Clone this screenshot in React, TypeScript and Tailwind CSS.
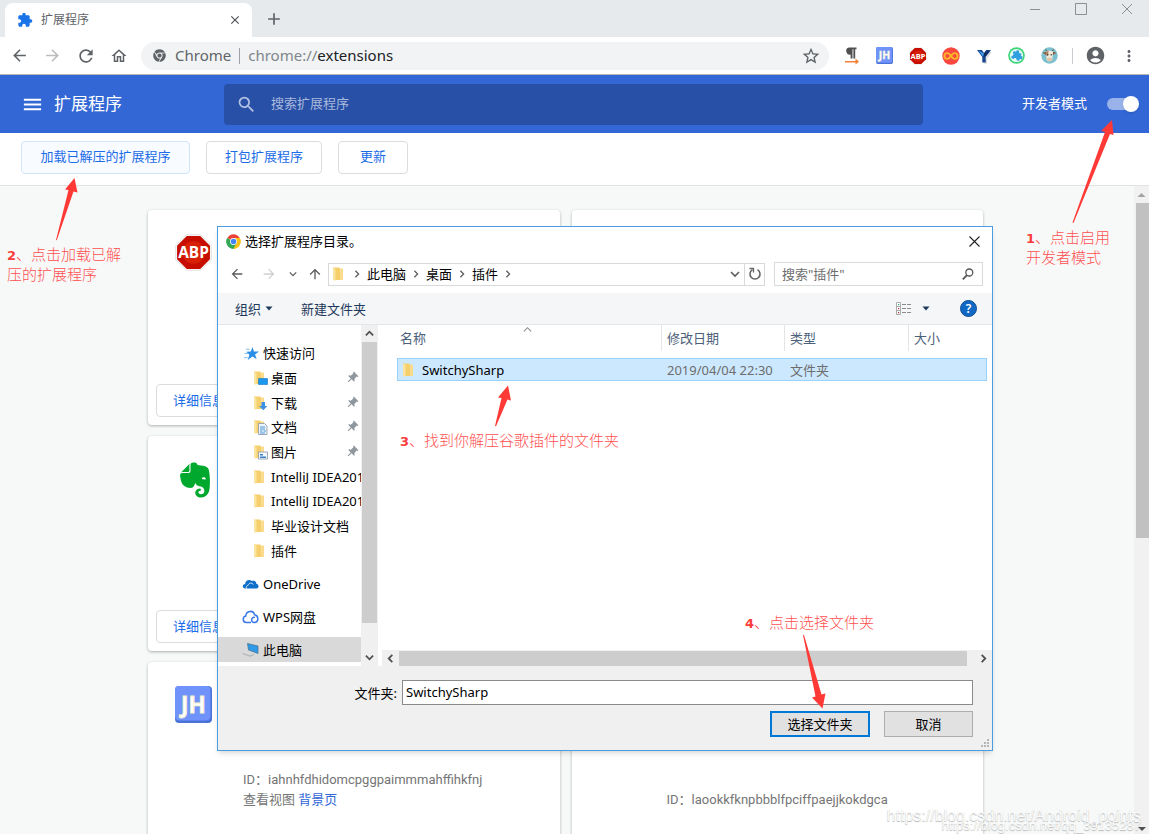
import React from "react";
import {
  MdAccountCircle,
  MdAdd,
  MdArrowBack,
  MdArrowForward,
  MdClose,
  MdExtension,
  MdMenu,
  MdMoreVert,
  MdOutlineHome,
  MdPushPin,
  MdRefresh,
  MdSearch,
  MdStarBorder,
} from "react-icons/md";
import { FaChrome, FaEvernote } from "react-icons/fa";

type IconProps = { className?: string };

/* ---------- logos ---------- */

function AbpLogo({ className }: IconProps) {
  return (
    <svg viewBox="0 0 36 36" className={className} aria-hidden="true">
      <path d="M11 .5h14L35.500 11v14L25 35.500H11L.5 25V11z" fill="#f4f4f4" stroke="#dcdcdc" strokeWidth=".6" />
      <path d="M11.500 2h13L34 11.500v13L24.500 34h-13L2 24.500v-13z" fill="#c70d00" />
      <circle cx="18" cy="18" r="11" fill="#e8340c" opacity=".5" />
      <text x="18" y="23.500" textAnchor="middle" fontSize="15" fontWeight="700" fill="#fff" fontFamily="Open Sans, sans-serif">
        ABP
      </text>
    </svg>
  );
}

function JhLogo({ className }: IconProps) {
  return (
    <svg viewBox="0 0 36 36" className={className} aria-hidden="true">
      <rect width="36" height="36" rx="4" fill="#4a72d8" />
      <rect x="0" y="0" width="34.500" height="33.500" rx="4" fill="#6f93fa" />
      <text x="18" y="26" textAnchor="middle" fontSize="22" fontWeight="700" fill="#fff" stroke="#f5f0c8" strokeWidth=".8" fontFamily="Open Sans, sans-serif">
        JH
      </text>
    </svg>
  );
}

function ChromeLogo({ className }: IconProps) {
  return (
    <svg viewBox="0 0 48 48" className={className} aria-hidden="true">
      <circle cx="24" cy="24" r="23" fill="#fff" />
      <path d="M24 24 4.100 12.500A23 23 0 0 1 43.900 12.500H24z" fill="#ea4335" />
      <path d="M24 24 43.900 12.500A23 23 0 0 1 24 47z" fill="#fbc116" />
      <path d="M24 24V47A23 23 0 0 1 4.100 12.500z" fill="#34a853" />
      <path d="M24 13h19.900A23 23 0 0 1 24 47l9.500-17.500z" fill="#fbc116" />
      <path d="M14.500 29.500 4.100 12.500A23 23 0 0 0 24 47l9.500-17.500z" fill="#34a853" />
      <circle cx="24" cy="24" r="11" fill="#fff" />
      <circle cx="24" cy="24" r="8.800" fill="#4285f4" />
    </svg>
  );
}

function PilcrowIcon({ className }: IconProps) {
  return (
    <svg viewBox="0 0 18 18" className={className} aria-hidden="true">
      <path d="M6 .5h7.500v1.800h-1.300V11.500h-1.800V2.300H9.500v9.200H7.600V7.500A3.500 3.500 0 0 1 6 .5z" fill="#505050" />
      <path d="M2 14h10.500v-2.500l3.500 3.300-3.500 2.700V15.500H2z" fill="#f58134" />
    </svg>
  );
}

function InfinityIcon({ className }: IconProps) {
  return (
    <svg viewBox="0 0 18 18" className={className} aria-hidden="true">
      <circle cx="9" cy="9" r="8.700" fill="#f9483f" />
      <path
        d="M9 9c-1.200-1.900-2.200-2.900-3.700-2.900a2.900 2.900 0 0 0 0 5.800C6.800 11.900 7.800 10.900 9 9s2.200-2.900 3.700-2.900a2.900 2.900 0 0 1 0 5.800C11.200 11.900 10.200 10.900 9 9z"
        fill="none"
        stroke="#fcb827"
        strokeWidth="1.900"
      />
    </svg>
  );
}

function YIcon({ className }: IconProps) {
  return (
    <svg viewBox="0 0 18 18" className={className} aria-hidden="true">
      <path d="M14 4.500 16.500 5l-4.500 7v4.500l-3 .5z" fill="#d9d9d9" />
      <path d="M2 3h14l-5.300 7v5.500H7.300V10z" fill="#16458c" />
      <path d="M3.500 3.500 9 6.500l-1.200 3z" fill="#3fa0f0" />
      <path d="M14.500 3.500 9 6.500l.5 3.500z" fill="#10284d" />
      <path d="M6.500 2.500h5L9 6z" fill="#fff" />
    </svg>
  );
}

function GreenPuzzleIcon({ className }: IconProps) {
  return (
    <svg viewBox="0 0 18 18" className={className} aria-hidden="true">
      <circle cx="9" cy="9" r="8.800" fill="#3ed47a" />
      <circle cx="9" cy="9" r="7" fill="#e4fbf3" />
      <g transform="rotate(20 9 9)">
        <path
          d="M4.500 5.500h2.800a1.700 1.700 0 1 1 3.200 0h3v2.400a1.600 1.600 0 1 1 0 3v2.600h-3a1.600 1.600 0 0 0-3.200 0H4.500v-2.700a1.500 1.500 0 0 0 0-2.900z"
          fill="#2f9fe0"
        />
      </g>
    </svg>
  );
}

function CowIcon({ className }: IconProps) {
  return (
    <svg viewBox="0 0 18 18" className={className} aria-hidden="true">
      <circle cx="9" cy="9" r="8.700" fill="#7cc0cf" />
      <path d="M1.500 6 6 5 5.500 8.500z" fill="#8d5a3c" />
      <path d="M16.500 6 12 5l.5 3.500z" fill="#8d5a3c" />
      <path d="M5 2.500c.2 1.500 1 2.200 2 2.200M13 2.500c-.2 1.500-1 2.200-2 2.200" fill="none" stroke="#5b4636" />
      <path d="M5.300 5C7 3.800 11 3.800 12.700 5L12 13c-.5 3-5.500 3-6 0z" fill="#f3eadb" />
      <path d="M5.300 5 8 4.300 7.500 9l-1.800.5z" fill="#a87a5a" />
      <ellipse cx="9" cy="13" rx="2.800" ry="2" fill="#e5c3a6" />
      <circle cx="7.200" cy="8.300" r=".8" fill="#333" />
      <circle cx="10.800" cy="8.300" r=".8" fill="#333" />
    </svg>
  );
}

/* ---------- file dialog icons ---------- */

function FolderIcon({ className, children }: React.PropsWithChildren<IconProps>) {
  return (
    <svg viewBox="0 0 16 16" className={className} aria-hidden="true">
      <path d="M2 1.500h6L9.500 3v11H3z" fill="#f5cf6b" />
      <path d="M2 1.500 4.500 3v12L2 14z" fill="#fbe3a0" />
      <path d="M9.500 2.500H12V14H9z" fill="#fadb8c" />
      {children}
    </svg>
  );
}

function Chevron({ d, className, width = 1.6 }: { d: string; className?: string; width?: number }) {
  return (
    <svg viewBox="0 0 10 10" className={className} aria-hidden="true">
      <path d={d} fill="none" stroke="currentColor" strokeWidth={width} />
    </svg>
  );
}

const UP = "M1 7l4-4 4 4";
const DOWN = "M1 3l4 4 4-4";
const LEFT = "M7 1L3 5l4 4";
const RIGHT = "M3 1l4 4-4 4";

const badges = {
  desktop: <path d="M6.500 8.500h9v6h-9z" fill="#1a97ee" stroke="#1474c4" strokeWidth=".6" />,
  download: <path d="M9.500 7h3.500v4h2.300l-4 4.300L7 11h2.500z" fill="#3d8fdf" />,
  docs: (
    <>
      <path d="M6.500 4.500h6L15 7v8.500H6.500z" fill="#eef4fa" stroke="#8696a8" strokeWidth=".8" />
      <path d="M8 8h5M8 10h5M8 12h2.500m1 0H14M8 14h5" stroke="#4a94d4" />
    </>
  ),
  pictures: (
    <>
      <path d="M6.500 8h9v7h-9z" fill="#f4f8fc" stroke="#8696a8" strokeWidth=".8" />
      <path d="M8 10h3v1.500H8zM8 12.500h6V14H8z" fill="#3b7fc4" />
    </>
  ),
};

type QuickItem = { name: string; badge?: keyof typeof badges };

const quickItems: QuickItem[] = [
  { name: "桌面", badge: "desktop" },
  { name: "下载", badge: "download" },
  { name: "文档", badge: "docs" },
  { name: "图片", badge: "pictures" },
  { name: "IntelliJ IDEA201" },
  { name: "IntelliJ IDEA201" },
  { name: "毕业设计文档" },
  { name: "插件" },
];

const crumbs = ["此电脑", "桌面", "插件"];

/* ---------- browser chrome ---------- */

function TabStrip() {
  return (
    <div className="flex h-[37px] shrink-0 items-end bg-[#e7eaed] pl-[5px]">
      <div className="flex h-[34px] w-[247px] items-center rounded-t-lg bg-white pr-2.5 pl-3 text-[12px] text-[#5f6368]">
        <MdExtension className="mr-2 size-4 text-[#1a73e8]" />
        <span className="flex-1">扩展程序</span>
        <button aria-label="关闭标签页">
          <MdClose className="size-3.5 text-[#4d5156]" />
        </button>
      </div>
      <button aria-label="打开新的标签页" className="mb-2 ml-3">
        <MdAdd className="size-5 text-[#5f6368]" />
      </button>
      <div className="ml-auto flex items-start gap-[34px] self-start pt-[3px] pr-4 text-[#8c8f92]">
        <button aria-label="最小化">
          <svg viewBox="0 0 12 12" className="size-3">
            <path d="M1 6.500h10" stroke="currentColor" />
          </svg>
        </button>
        <button aria-label="最大化">
          <svg viewBox="0 0 12 12" className="size-3">
            <path d="M.5.5h11v11H.5z" fill="none" stroke="currentColor" />
          </svg>
        </button>
        <button aria-label="关闭">
          <svg viewBox="0 0 12 12" className="size-3">
            <path d="M1 1l10 10M11 1L1 11" stroke="currentColor" />
          </svg>
        </button>
      </div>
    </div>
  );
}

function ToolButton({ label, children }: { label: string; children: React.ReactNode }) {
  return (
    <button aria-label={label} className="flex w-[33px] shrink-0 items-center justify-center">
      {children}
    </button>
  );
}

function AddressBar() {
  return (
    <div className="flex h-[38px] shrink-0 items-center border-b border-[#b6b6b6] bg-white pr-1 pl-[3px] text-[#5f6368]">
      <ToolButton label="后退"><MdArrowBack className="size-[19px]" /></ToolButton>
      <ToolButton label="前进"><MdArrowForward className="size-[19px] text-[#babcbe]" /></ToolButton>
      <ToolButton label="重新加载"><MdRefresh className="size-5" /></ToolButton>
      <ToolButton label="主页"><MdOutlineHome className="size-[18px]" /></ToolButton>
      <div className="mx-1.5 flex h-7 flex-1 items-center rounded-full bg-[#f1f3f4] pr-2 pl-3">
        <FaChrome className="size-[13px]" />
        <div className="ml-[9px] flex flex-1 items-center text-[15px]">
          <span>Chrome</span>
          <span className="mx-2 h-4 w-px bg-[#9aa0a6]" />
          <span className="text-[#80868b]">
            chrome://<span className="text-[#202124]">extensions</span>
          </span>
        </div>
        <button aria-label="为此网页添加书签"><MdStarBorder className="size-5" /></button>
      </div>
      <ToolButton label="段落"><PilcrowIcon className="size-[18px]" /></ToolButton>
      <ToolButton label="JH"><JhLogo className="size-[17px]" /></ToolButton>
      <ToolButton label="ABP"><AbpLogo className="size-[18px]" /></ToolButton>
      <ToolButton label="Infinity"><InfinityIcon className="size-[18px]" /></ToolButton>
      <ToolButton label="Y"><YIcon className="size-[18px]" /></ToolButton>
      <ToolButton label="管理扩展"><GreenPuzzleIcon className="size-[17px]" /></ToolButton>
      <ToolButton label="油猴"><CowIcon className="size-[17px]" /></ToolButton>
      <span className="mx-1.5 h-4 w-px bg-[#c9ccd0]" />
      <ToolButton label="个人资料"><MdAccountCircle className="size-[21px]" /></ToolButton>
      <ToolButton label="自定义及控制"><MdMoreVert className="size-[18px]" /></ToolButton>
    </div>
  );
}

/* ---------- extensions page ---------- */

function PageHeader() {
  return (
    <header className="flex h-[58px] shrink-0 items-center bg-[#3367d6] text-white">
      <div className="flex w-[224px] items-center gap-2.5 pl-[21px]">
        <button aria-label="主菜单"><MdMenu className="size-[23px]" /></button>
        <h1 className="text-[17px] leading-6">扩展程序</h1>
      </div>
      <label className="flex h-[41px] flex-1 items-center gap-3.5 rounded-sm bg-[#2850a7] pl-3 text-[#b4c2e2]">
        <MdSearch className="size-[21px]" />
        <input
          type="search"
          aria-label="搜索扩展程序"
          placeholder="搜索扩展程序"
          className="flex-1 bg-transparent text-[13px] outline-none placeholder:text-[#a9b9dc]"
        />
      </label>
      <label className="flex w-[226px] items-center justify-end gap-5 pr-3 text-[13px]">
        开发者模式
        <input
          type="checkbox"
          defaultChecked
          className="relative h-3 w-[30px] appearance-none rounded-full bg-[#99b3ea] before:absolute before:-top-0.5 before:-right-0.5 before:size-4 before:rounded-full before:bg-white before:shadow-sm"
        />
      </label>
    </header>
  );
}

function DevToolbar() {
  return (
    <div className="flex h-[53px] shrink-0 items-center gap-4 border-b border-[#e0e2e3] bg-white pb-1 pl-[21px] text-[13px] text-[#1a6ce8]">
      <button className="h-[33px] w-[169px] rounded border border-[#d2e3fc] bg-[#f8fbff]">加载已解压的扩展程序</button>
      <button className="h-[33px] w-[116px] rounded border border-[#dadce0]">打包扩展程序</button>
      <button className="h-[33px] w-[70px] rounded border border-[#dadce0]">更新</button>
    </div>
  );
}

type CardProps = { icon?: React.ReactNode; id?: string; views?: string };

function ExtensionCard({ icon, id, views }: CardProps) {
  return (
    <article className="flex h-[215px] flex-col justify-between rounded bg-white p-2 shadow-[0_1px_3px_rgba(60,64,67,0.4)]">
      <div className="flex h-[140px] gap-[31px] pt-4 pl-[19px]">
        <div className="size-[37px] shrink-0">{icon}</div>
        <div className="self-end font-[Roboto,'Noto_Sans_CJK_SC',sans-serif] text-[13px] leading-5 text-[#757575]">
          {id && <p>ID：{id}</p>}
          {views && (
            <p>
              查看视图 <a href="#views" className="text-[#3367d6]">{views}</a>
            </p>
          )}
        </div>
      </div>
      <button className="h-[33px] w-[86px] rounded border border-[#dadce0] text-[13px] text-[#1a6ce8]">详细信息</button>
    </article>
  );
}

function ExtensionsPage() {
  return (
    <div className="flex min-h-0 flex-1 bg-[#f7f9f9]">
      <main className="min-w-0 flex-1 overflow-hidden pt-6 pr-[3px]">
        <div className="mx-auto grid max-w-[835px] grid-cols-2 gap-x-3 gap-y-[11px]">
          <ExtensionCard icon={<AbpLogo className="size-full" />} />
          <ExtensionCard />
          <ExtensionCard icon={<FaEvernote className="size-10 text-[#00a82d]" />} />
          <ExtensionCard />
          <ExtensionCard icon={<JhLogo className="size-full" />} id="iahnhfdhidomcpggpaimmmahffihkfnj" views="背景页" />
          <ExtensionCard id="laookkfknpbbblfpciffpaejjkokdgca" />
        </div>
      </main>
      {/* page scrollbar */}
      <div className="flex w-[15px] flex-col items-center bg-[#f1f1f1]">
        <svg viewBox="0 0 15 17" className="h-[17px] w-[15px] shrink-0">
          <path d="M3.500 11l4-4 4 4z" fill="#a3a3a3" />
        </svg>
        <div className="h-[335px] w-[13px] self-end bg-[#c1c1c1]" />
        <svg viewBox="0 0 15 12" className="mt-auto h-3 w-[15px] shrink-0">
          <path d="M4 5h8l-4 4z" fill="#505050" />
        </svg>
      </div>
    </div>
  );
}

/* ---------- folder picker ---------- */

function DialogNav() {
  return (
    <div className="flex h-[38px] items-center pr-[9px] pl-[11px] text-[#5c5c5c]">
      <button aria-label="返回"><MdArrowBack className="size-4" /></button>
      <button aria-label="前进" className="ml-4"><MdArrowForward className="size-4 text-[#d0d0d0]" /></button>
      <button aria-label="最近的位置" className="ml-3"><Chevron d={DOWN} className="size-2" /></button>
      <button aria-label="上移" className="ml-2.5"><MdArrowBack className="size-4 rotate-90" /></button>
      <div className="ml-[5px] flex h-[23px] w-[437px] items-center border border-[#d9d9d9] pl-0.5 text-black">
        <FolderIcon className="size-4" />
        {crumbs.map((crumb) => (
          <React.Fragment key={crumb}>
            <Chevron d={RIGHT} className="mx-1.5 size-2 text-[#5c5c5c]" />
            <button>{crumb}</button>
          </React.Fragment>
        ))}
        <Chevron d={RIGHT} className="mx-1.5 size-2 text-[#5c5c5c]" />
        <button aria-label="以前的位置" className="mr-1 ml-auto text-[#5c5c5c]">
          <Chevron d={DOWN} className="size-2.5" />
        </button>
        <button aria-label="刷新" className="flex h-full w-5 items-center justify-center border-l border-[#d9d9d9]">
          <svg viewBox="0 0 14 14" className="size-3.5">
            <path d="M4.500 2.600A5 5 0 1 0 9.500 2.600" fill="none" stroke="#666" strokeWidth="1.600" />
            <path d="M1.500 1.500h4v4" fill="none" stroke="#666" strokeWidth="1.300" />
          </svg>
        </button>
      </div>
      <label className="ml-[9px] flex h-6 min-w-0 flex-1 items-center border border-[#d9d9d9] pr-2 pl-[7px]">
        <input aria-label="搜索插件" placeholder={'搜索"插件"'} className="min-w-0 flex-1 outline-none placeholder:text-[#6d6d6d]" />
        <svg viewBox="0 0 12 12" className="size-3">
          <circle cx="7.300" cy="4.500" r="3.500" fill="none" stroke="#555" strokeWidth="1.300" />
          <path d="M5 7.200.8 11.400" stroke="#555" strokeWidth="1.800" />
        </svg>
      </label>
    </div>
  );
}

function Caret() {
  return (
    <svg viewBox="0 0 8 5" className="h-[5px] w-2" aria-hidden="true">
      <path d="M.5.5h7L4 4.500z" fill="#1e395b" />
    </svg>
  );
}

function DialogToolbar() {
  return (
    <div className="flex h-8 items-center border-b border-[#e4e7ea] bg-[#f4f6f8] pr-[15px] pl-[17px] text-[#1e395b]">
      <button className="flex items-center gap-1">
        组织 <Caret />
      </button>
      <button className="ml-7">新建文件夹</button>
      <button aria-label="更改您的视图" className="ml-auto flex items-center gap-2.5">
        <svg viewBox="0 0 16 13" className="h-[13px] w-4">
          <path d="M.5.5h4v12h-4zM.5 4.500h4M.5 8.500h4" fill="#fff" stroke="#999" strokeWidth=".8" />
          <path d="M2 2h1.200v1.200H2z" fill="#3a7" />
          <path d="M2 6h1.200v1.200H2zM2 10h1.200v1.200H2z" fill="#c33" />
          <path d="M6 2.500h4m1 0h4M6 6.500h4m1 0h4M6 10.500h4m1 0h4" stroke="#8c8c8c" />
        </svg>
        <Caret />
      </button>
      <button
        aria-label="获取帮助"
        className="ml-[30px] flex size-[17px] items-center justify-center rounded-full border border-[#0d4f94] bg-[#1068c4] text-[12px] leading-none font-semibold text-white"
      >
        ?
      </button>
    </div>
  );
}

function SideTree() {
  return (
    <div className="flex w-[160px] shrink-0">
      <nav className="flex w-[143px] flex-col overflow-hidden pt-4 whitespace-nowrap">
        <ul className="grid h-[222px] auto-rows-fr grid-cols-[minmax(0,1fr)] items-center">
          <li className="flex items-center gap-1 pl-[26px]">
            <svg viewBox="0 0 16 16" className="size-[15px]">
              <path d="M9 1l1.600 4.800H16l-4.200 3.200L13.500 14 9 11.200 4 15l1.700-5.600L2.500 6l4.700-.2z" fill="#2b8fe8" />
              <path d="M2 3.500h4M.5 8h4M0 12.500h4" stroke="#7dbdf2" />
            </svg>
            快速访问
          </li>
          {quickItems.map((item, i) => (
            <li key={i} className="flex items-center gap-[3px] pl-[34px]">
              <FolderIcon className="size-4 shrink-0">{item.badge && badges[item.badge]}</FolderIcon>
              {item.name}
              {item.badge && <MdPushPin className="mr-0.5 ml-auto size-3.5 rotate-45 text-[#8f979e]" />}
            </li>
          ))}
        </ul>
        <ul className="mt-2 flex flex-col gap-2">
          <li className="flex h-[25px] items-center gap-1 pl-6">
            <svg viewBox="0 0 17 12" className="h-3 w-[17px]">
              <path d="M3.500 10.500C-.5 10.500.3 6 3.200 6 3 2.500 7.500.5 9.800 3c2.400-1 4.500.5 4.600 2.700C17.500 6.500 17 10.500 14.500 10.500z" fill="#0f6fc9" />
              <path d="M5.500 11.500c-2-1-1.500-3.800.5-4 .5-2.600 4-3.200 5.300-1" fill="none" stroke="#fff" strokeWidth=".8" />
            </svg>
            OneDrive
          </li>
          <li className="flex h-[25px] items-center gap-1 pl-6">
            <svg viewBox="0 0 17 14" className="h-3.5 w-[17px]">
              <path
                d="M9 12.500H4.200A3.300 3.300 0 0 1 3.800 6C4 .5 11.500-.3 12.500 4.800c4 .5 4.700 6.700.5 7.700-3 .3-4-2-3-4 .7-1.200 2-1.500 3-1"
                fill="none"
                stroke="#3b78e7"
                strokeWidth="1.500"
              />
            </svg>
            WPS网盘
          </li>
          <li className="flex h-[25px] items-center gap-1 bg-[#d9d9d9] pl-6">
            <svg viewBox="0 0 17 15" className="h-[15px] w-[17px]">
              <path d="M5.500 1.500 16 4v7.500L6.500 8z" fill="#2f9be8" stroke="#4c6d88" strokeWidth=".7" />
              <path d="M.5 11.500 8 14l4-1.500" fill="none" stroke="#aeb4b9" strokeWidth="1.200" />
            </svg>
            此电脑
          </li>
        </ul>
      </nav>
      <div className="flex w-[17px] flex-col items-center bg-[#f0f0f0] text-[#505050]">
        <Chevron d={UP} className="my-1 size-[9px] shrink-0" width={2} />
        <div className="h-[281px] w-[15px] bg-[#cdcdcd]" />
        <Chevron d={DOWN} className="mt-auto mb-1 size-[9px] shrink-0" width={2} />
      </div>
    </div>
  );
}

function FileList() {
  return (
    <div className="ml-1 flex min-w-0 flex-1 flex-col">
      <div className="flex-1 pr-[5px] pl-[15px]">
        <table className="w-full table-fixed text-left">
          <colgroup>
            <col />
            <col className="w-[123px]" />
            <col className="w-[124px]" />
            <col className="w-[79px]" />
          </colgroup>
          <thead className="text-[#4c607a]">
            <tr>
              <th className="relative h-[33px] p-0 align-top font-normal">
                <Chevron d={UP} className="absolute top-0 left-[126px] size-[9px] text-[#8a8a8a]" width={1.2} />
                <div className="h-[26px] pl-[3px] leading-[26px]">名称</div>
              </th>
              {["修改日期", "类型", "大小"].map((title) => (
                <th key={title} className="p-0 align-top font-normal">
                  <div className="h-[26px] border-l border-[#e5e5e5] pl-[5px] leading-[26px]">{title}</div>
                </th>
              ))}
            </tr>
          </thead>
          <tbody>
            <tr className="h-[23px] bg-[#cce8ff] text-[#6d6d6d] outline -outline-offset-1 outline-[#99d1ff]">
              <td className="p-0">
                <div className="flex items-center gap-[5px] pl-1 text-black">
                  <FolderIcon className="size-4" />
                  SwitchySharp
                </div>
              </td>
              <td className="p-0 pl-1.5 whitespace-nowrap">2019/04/04 22:30</td>
              <td className="p-0 pl-1.5">文件夹</td>
              <td className="p-0" />
            </tr>
          </tbody>
        </table>
      </div>
      <div className="flex h-4 items-center bg-[#f0f0f0] text-[#505050]">
        <Chevron d={LEFT} className="mx-1 size-[9px]" width={2} />
        <div className="h-[15px] flex-1 bg-[#cdcdcd]" />
        <Chevron d={RIGHT} className="mr-1 ml-3 size-[9px]" width={2} />
      </div>
    </div>
  );
}

function FolderDialog() {
  return (
    <div
      role="dialog"
      aria-label="选择扩展程序目录"
      className="absolute top-[226px] left-[217px] w-[776px] border border-[#4a9de0] bg-white text-[13px] leading-5 text-black shadow-md"
    >
      <div className="flex h-7 items-center pr-3 pl-2">
        <ChromeLogo className="mr-1 size-[15px]" />
        <h2 className="flex-1">选择扩展程序目录。</h2>
        <button aria-label="关闭">
          <svg viewBox="0 0 11 11" className="size-[11px]">
            <path d="M.5.5l10 10M10.500.5l-10 10" stroke="#222" strokeWidth="1.100" />
          </svg>
        </button>
      </div>
      <DialogNav />
      <DialogToolbar />
      <div className="flex h-[341px]">
        <SideTree />
        <FileList />
      </div>
      <div className="bg-[#f0f0f0] pt-3.5 pr-[19px] pb-[13px]">
        <div className="flex items-center">
          <label htmlFor="folder" className="w-[184px] pr-[5px] text-right">文件夹:</label>
          <input id="folder" defaultValue="SwitchySharp" className="h-[25px] min-w-0 flex-1 border border-[#8a8a8a] bg-white px-[3px] pb-0.5" />
        </div>
        <div className="mt-1.5 flex justify-end gap-3.5">
          <button className="h-[26px] w-[100px] border-2 border-[#0078d7] bg-[#e1e1e1]">选择文件夹</button>
          <button className="h-[26px] w-[89px] border border-[#adadad] bg-[#e1e1e1]">取消</button>
        </div>
      </div>
      <svg viewBox="0 0 9 9" className="absolute right-0.5 bottom-0.5 size-[9px]">
        <path d="M6 0h2v2H6zM3 3h2v2H3zM6 3h2v2H6zM0 6h2v2H0zM3 6h2v2H3zM6 6h2v2H6z" fill="#b5b5b5" />
      </svg>
    </div>
  );
}

/* ---------- red step notes ---------- */

function Note({ step, className, children }: React.PropsWithChildren<{ step: number; className: string }>) {
  return (
    <p className={`absolute text-[15px] leading-[19px] font-light whitespace-nowrap text-[#ff5050] ${className}`}>
      <span className="font-['DejaVu_Sans'] text-[13px] font-bold text-[#fa3c3c]">{step}</span>、{children}
    </p>
  );
}

function Notes() {
  return (
    <>
      <svg viewBox="1070 120 46 104" className="absolute top-[120px] right-[33px] h-[104px] w-[46px]">
        <path d="M1112 120l-11 11 4 1-32.500 90.500 1 .5L1110 134l3.500 1z" fill="#ff3a36" />
      </svg>
      <Note step={1} className="top-[228px] right-[39px]">
        点击启用
        <br />
        开发者模式
      </Note>

      <svg viewBox="54 178 26 64" className="absolute top-[178px] left-[54px] h-16 w-[26px]">
        <path d="M74.500 178L65 189.500l3.500.5-12.500 50 .8.300L73.500 191.500l4 1z" fill="#ff3a36" />
      </svg>
      <Note step={2} className="top-[245px] left-[7px]">
        点击加载已解
        <br />
        压的扩展程序
      </Note>

      <svg viewBox="494 385 20 42" className="absolute top-[385px] left-[494px] h-[42px] w-5">
        <path d="M508 385.500L498 397.500l3.500.5-6.500 28 1 .3L507.500 399.500l3.500 1z" fill="#ff3a36" />
      </svg>
      <Note step={3} className="top-[431px] left-[400px]">找到你解压谷歌插件的文件夹</Note>

      <svg viewBox="800 634 28 76" className="absolute top-[634px] left-[800px] h-[76px] w-7">
        <path d="M803 635l12.500 61.500-3.500 1L822.500 708.500 825.500 693.500l-4 1L804 635z" fill="#ff3a36" />
      </svg>
      <Note step={4} className="top-[613px] left-[745px]">点击选择文件夹</Note>
    </>
  );
}

export default function App() {
  return (
    <div className="relative flex h-screen flex-col overflow-hidden font-['Noto_Sans','Noto_Sans_CJK_SC',sans-serif]">
      <TabStrip />
      <AddressBar />
      <PageHeader />
      <DevToolbar />
      <ExtensionsPage />
      <FolderDialog />
      <Notes />
      {/* watermark, two overlapping lines */}
      <div className="pointer-events-none absolute right-2 bottom-0 flex flex-col items-end font-['Liberation_Sans',sans-serif] leading-4 text-[#fafafa] [text-shadow:0_1px_1px_#b5b5b5]">
        <span className="text-[16px]/4">https://blog.csdn.net/Android_points</span>
        <span className="-mt-1.5 text-[13px]/4">https://blog.csdn.net/qq_39135287</span>
      </div>
    </div>
  );
}
